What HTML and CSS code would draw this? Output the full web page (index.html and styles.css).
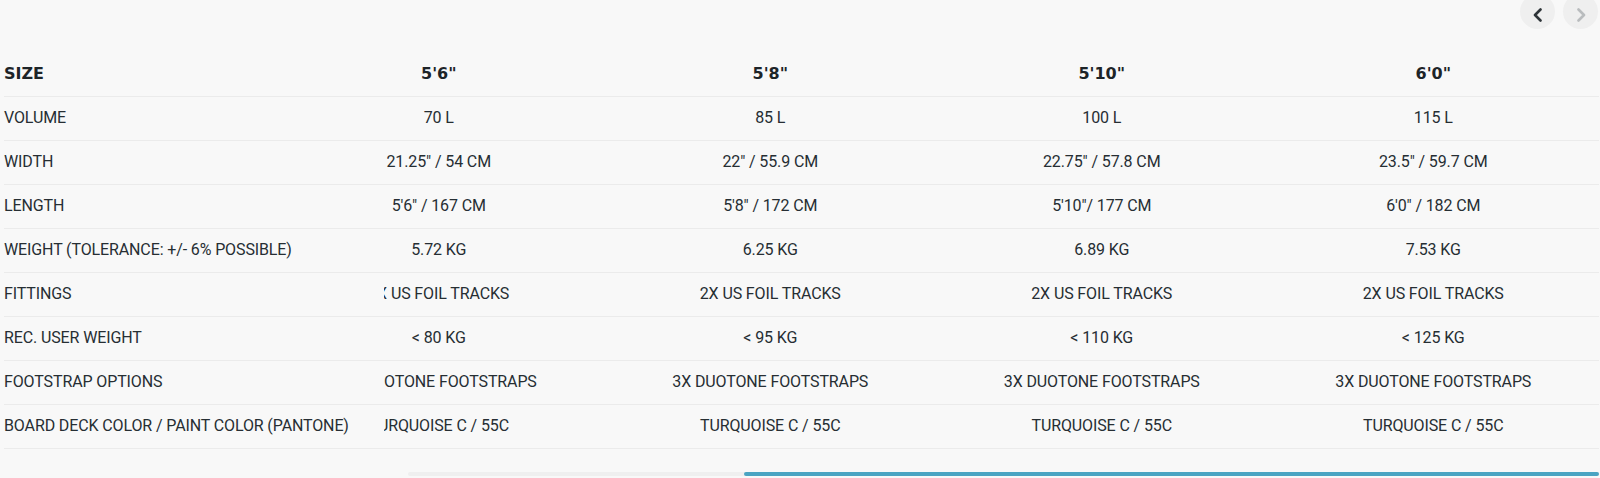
FILE: index.html
```html
<!DOCTYPE html>
<html lang="en">
<head>
<meta charset="utf-8">
<title>Board specs</title>
<link rel="stylesheet" href="styles.css">
</head>
<body>
<div class="page">
  <div class="nav">
    <button class="nav-btn" aria-label="Previous">
      <svg width="12" height="14" viewBox="0 0 12 14"><polyline points="8.5,1.5 3,7 8.5,12.5" fill="none" stroke="#2f3539" stroke-width="2.6" stroke-linecap="round" stroke-linejoin="round"/></svg>
    </button>
    <button class="nav-btn disabled" aria-label="Next">
      <svg width="12" height="14" viewBox="0 0 12 14"><polyline points="3.5,1.5 9,7 3.5,12.5" fill="none" stroke="#b9bcbe" stroke-width="2.6" stroke-linecap="round" stroke-linejoin="round"/></svg>
    </button>
  </div>

  <div class="specs">
    <div class="labels">
      <div class="cell head">SIZE</div>
      <div class="cell">VOLUME</div>
      <div class="cell">WIDTH</div>
      <div class="cell">LENGTH</div>
      <div class="cell">WEIGHT (TOLERANCE: +/- 6% POSSIBLE)</div>
      <div class="cell">FITTINGS</div>
      <div class="cell">REC. USER WEIGHT</div>
      <div class="cell">FOOTSTRAP OPTIONS</div>
      <div class="cell">BOARD DECK COLOR / PAINT COLOR (PANTONE)</div>
    </div>
    <div class="viewport">
      <div class="track">
        <div class="col">
          <div class="cell head">5'6"</div>
          <div class="cell">70 L</div>
          <div class="cell">21.25" / 54 CM</div>
          <div class="cell">5'6" / 167 CM</div>
          <div class="cell">5.72 KG</div>
          <div class="cell">2X US FOIL TRACKS</div>
          <div class="cell">&lt; 80 KG</div>
          <div class="cell">3X DUOTONE FOOTSTRAPS</div>
          <div class="cell">TURQUOISE C / 55C</div>
        </div>
        <div class="col">
          <div class="cell head">5'8"</div>
          <div class="cell">85 L</div>
          <div class="cell">22" / 55.9 CM</div>
          <div class="cell">5'8" / 172 CM</div>
          <div class="cell">6.25 KG</div>
          <div class="cell">2X US FOIL TRACKS</div>
          <div class="cell">&lt; 95 KG</div>
          <div class="cell">3X DUOTONE FOOTSTRAPS</div>
          <div class="cell">TURQUOISE C / 55C</div>
        </div>
        <div class="col">
          <div class="cell head">5'10"</div>
          <div class="cell">100 L</div>
          <div class="cell">22.75" / 57.8 CM</div>
          <div class="cell">5'10"/ 177 CM</div>
          <div class="cell">6.89 KG</div>
          <div class="cell">2X US FOIL TRACKS</div>
          <div class="cell">&lt; 110 KG</div>
          <div class="cell">3X DUOTONE FOOTSTRAPS</div>
          <div class="cell">TURQUOISE C / 55C</div>
        </div>
        <div class="col">
          <div class="cell head">6'0"</div>
          <div class="cell">115 L</div>
          <div class="cell">23.5" / 59.7 CM</div>
          <div class="cell">6'0" / 182 CM</div>
          <div class="cell">7.53 KG</div>
          <div class="cell">2X US FOIL TRACKS</div>
          <div class="cell">&lt; 125 KG</div>
          <div class="cell">3X DUOTONE FOOTSTRAPS</div>
          <div class="cell">TURQUOISE C / 55C</div>
        </div>
      </div>
    </div>
  </div>

  <div class="scrollbar">
    <div class="thumb"></div>
  </div>
</div>
</body>
</html>
```

FILE: styles.css
```css
* { box-sizing: border-box; }

html, body {
  margin: 0;
  padding: 0;
  background: #f8f8f8;
}

body {
  font-family: Roboto, "Liberation Sans", sans-serif;
  color: #262e33;
  overflow: hidden;
  height: 478px;
}

.page {
  width: 1600px;
  padding: 0 1px 0 4px;
}

.nav {
  display: flex;
  justify-content: flex-end;
  gap: 8px;
  margin-top: -6px;
  padding-right: 1px;
  height: 35px;
}

.nav-btn {
  width: 35px;
  height: 35px;
  border-radius: 50%;
  border: none;
  background: #efefef;
  padding: 0;
  display: flex;
  align-items: center;
  justify-content: center;
  padding-top: 6px;
}

.specs {
  display: flex;
  margin-top: 24px;
}

.labels {
  flex: 0 0 380px;
}

.viewport {
  flex: 0 0 1215px;
  overflow: hidden;
}

.track {
  display: flex;
  transform: translateX(-111px);
}

.col {
  flex: 0 0 331.5px;
}

.cell {
  height: 44px;
  border-bottom: 1px solid #ebebeb;
  display: flex;
  align-items: center;
  font-size: 16px;
  letter-spacing: -0.12px;
  white-space: nowrap;
  padding-bottom: 2px;
}

.col .cell {
  justify-content: center;
}

.cell.head {
  font-family: "DejaVu Sans", sans-serif;
  font-weight: 700;
  font-size: 16px;
  letter-spacing: 0;
  color: #1d2428;
}

.scrollbar {
  display: flex;
  margin: 23px 0 0 404px;
  height: 4px;
  background: #efefef;
  border-radius: 2px;
}

.thumb {
  margin-left: auto;
  width: 855px;
  height: 4px;
  background: #4aa4c2;
  border-radius: 2px;
}
```
